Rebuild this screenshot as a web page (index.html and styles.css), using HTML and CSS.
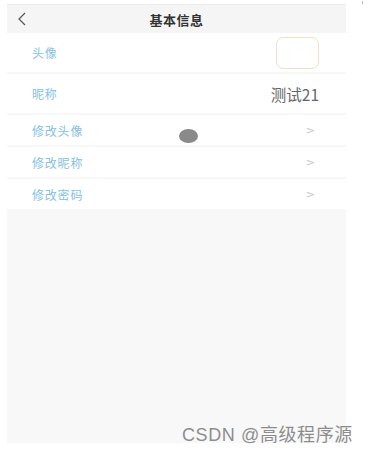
FILE: index.html
```html
<!DOCTYPE html>
<html lang="zh">
<head>
<meta charset="utf-8">
<title>基本信息</title>
<link rel="stylesheet" href="styles.css">
</head>
<body>
<div class="phone">
  <div class="header">
    <span class="back">
      <svg width="12" height="14" viewBox="0 0 12 14"><path d="M9 1 L3 7 L9 13" fill="none" stroke="#555" stroke-width="1.2"/></svg>
    </span>
    <span class="title">基本信息</span>
  </div>
  <div class="row tall">
    <span class="label">头像</span>
    <span class="avatar"></span>
  </div>
  <div class="row tall">
    <span class="label">昵称</span>
    <span class="value">测试21</span>
  </div>
  <div class="row">
    <span class="label">修改头像</span>
    <span class="chev">&gt;</span>
  </div>
  <div class="row">
    <span class="label">修改昵称</span>
    <span class="chev">&gt;</span>
  </div>
  <div class="row">
    <span class="label">修改密码</span>
    <span class="chev">&gt;</span>
  </div>
  <span class="dot"></span>
</div>
<span class="watermark">CSDN @高级程序源</span>
<span class="corner"></span>
</body>
</html>
```
FILE: styles.css
```css
html, body {
  margin: 0;
  padding: 0;
  background: #ffffff;
  font-family: "Noto Sans CJK SC", "Noto Sans", sans-serif;
}
body {
  position: relative;
  width: 368px;
  height: 454px;
  overflow: hidden;
}
.phone {
  position: relative;
  margin: 4px 0 0 7px;
  width: 339px;
  height: 439px;
  background: #f8f8f8;
  border-top: 1px solid #ececec;
  box-sizing: border-box;
  display: flex;
  flex-direction: column;
}
.header {
  position: relative;
  height: 28px;
  background: #f5f5f5;
  display: flex;
  align-items: center;
  justify-content: center;
}
.back {
  position: absolute;
  left: 9px;
  top: 7px;
  display: flex;
}
.title {
  font-size: 13px;
  font-weight: bold;
  color: #333;
  letter-spacing: 0.5px;
}
.row {
  height: 30px;
  background: #ffffff;
  margin-bottom: 2px;
  display: flex;
  align-items: center;
  justify-content: space-between;
  padding: 0 31px 0 25px;
}
.row.tall {
  height: 39px;
  padding-right: 27px;
}
.label {
  font-size: 12px;
  color: #86bfe5;
  letter-spacing: 0.8px;
}
.avatar {
  width: 43px;
  height: 32px;
  border: 1px solid #f1dfc6;
  border-radius: 7px;
  box-sizing: border-box;
}
.value {
  font-size: 15.5px;
  color: #666;
}
.chev {
  font-size: 11px;
  color: #c8c8c8;
  font-family: "DejaVu Sans", sans-serif;
}
.dot {
  position: absolute;
  left: 172px;
  top: 124px;
  width: 19px;
  height: 14px;
  border-radius: 50%;
  background: #8a8a8a;
}
.watermark {
  position: absolute;
  left: 182px;
  top: 420px;
  font-size: 18px;
  letter-spacing: 0.6px;
  color: #8c8c8c;
  font-family: "Liberation Sans", "Noto Sans CJK SC", sans-serif;
  text-shadow: 0 0 1px #fff;
  white-space: nowrap;
}
.corner {
  position: absolute;
  left: 362px;
  top: 1px;
  width: 1px;
  height: 3px;
  background: #bbb;
}
```
